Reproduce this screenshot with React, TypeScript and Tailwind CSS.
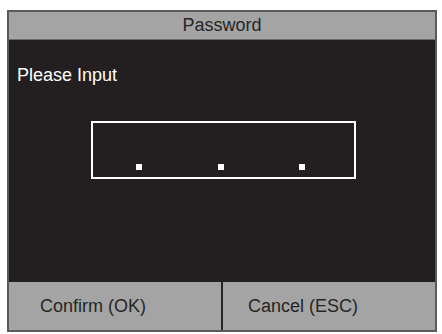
export default function App() {
  const font = { fontFamily: '"Liberation Sans", Arial, sans-serif' };
  return (
    <div className="w-[442px] h-[334px] bg-white pt-[10px] pl-[7px]" style={font}>
      <div className="w-[430px] h-[322px] border-2 border-[#5a5a5a] flex flex-col bg-[#231f20]">
        {/* Header */}
        <div className="h-[28px] bg-[#a4a4a4] border-b border-[#6a6a6a] flex items-center justify-center text-[18px] text-[#262626]">
          Password
        </div>

        {/* Body */}
        <div className="flex-1 flex flex-col px-[8px]">
          <div className="mt-[26px] text-[18px] text-white leading-none">Please Input</div>
          <div className="mt-[37px] ml-[74px] w-[265px] h-[58px] border-2 border-white flex items-end pb-[7px]">
            <span className="ml-[43px] w-[6px] h-[6px] bg-white" />
            <span className="ml-[76px] w-[6px] h-[6px] bg-white" />
            <span className="ml-[75px] w-[6px] h-[6px] bg-white" />
          </div>
        </div>

        {/* Footer */}
        <div className="h-[48px] flex bg-[#a4a4a4] text-[18px] text-[#262626]">
          <div className="w-[212px] flex items-center pl-[31px]">Confirm (OK)</div>
          <div className="w-[2px] bg-[#262626]" />
          <div className="flex-1 flex items-center pl-[25px]">Cancel (ESC)</div>
        </div>
      </div>
    </div>
  );
}
